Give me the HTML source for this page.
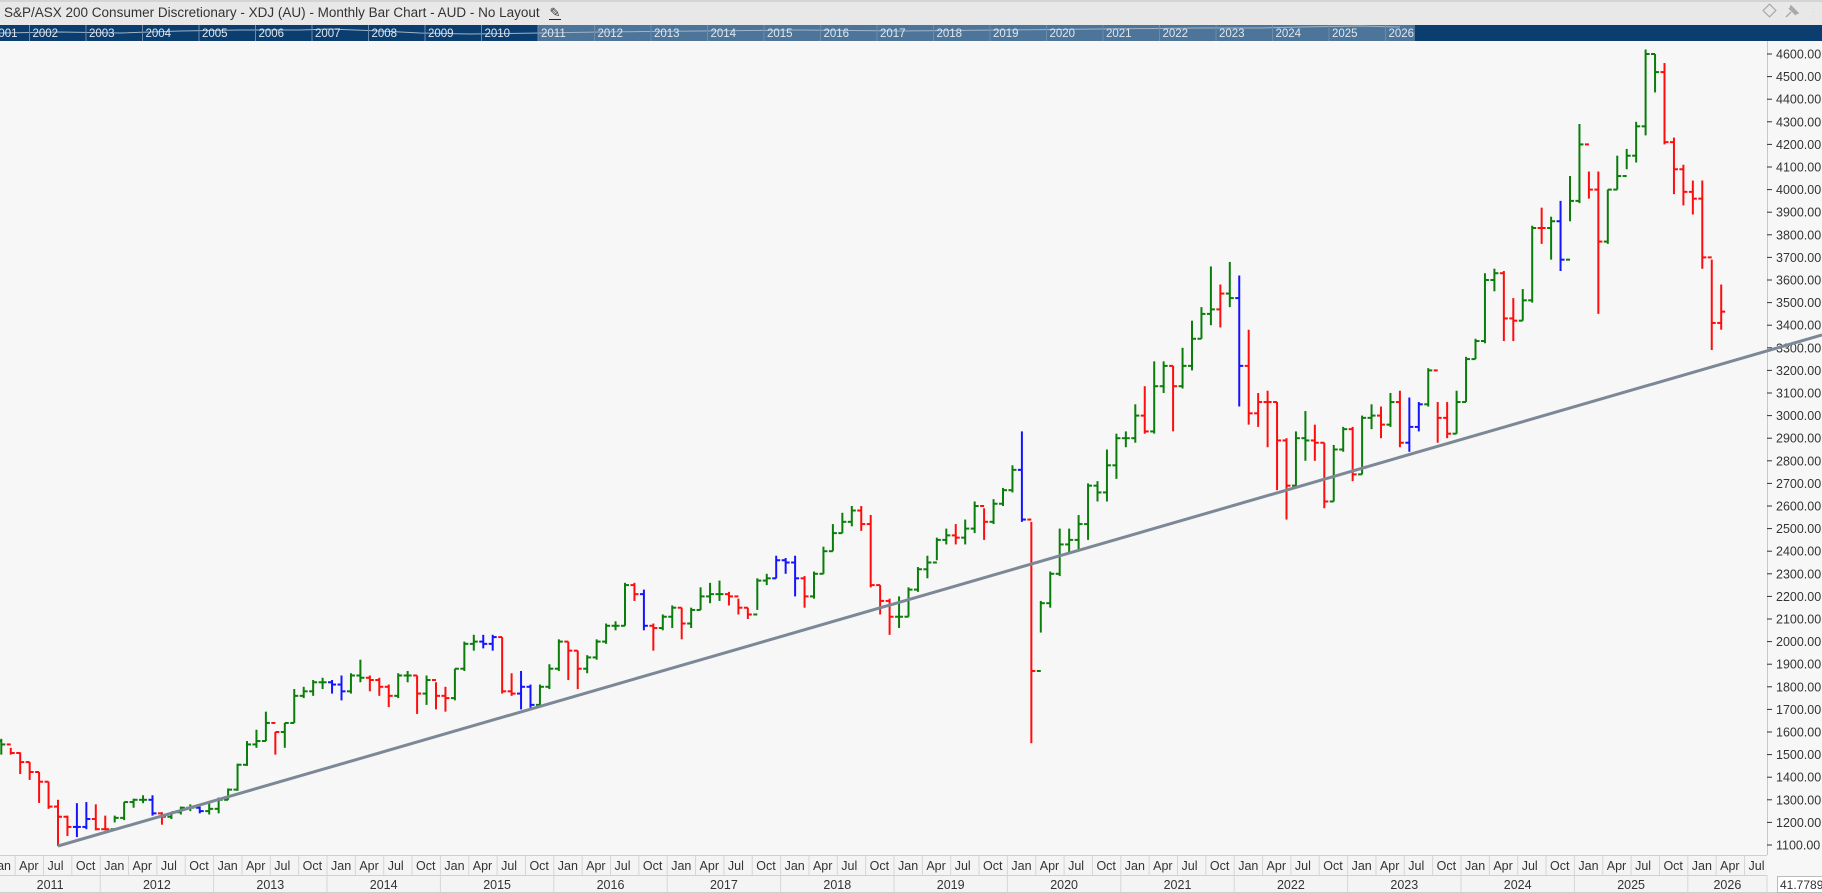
<!DOCTYPE html>
<html><head><meta charset="utf-8">
<style>
html,body{margin:0;padding:0;background:#f7f7f7;}
body{width:1822px;height:893px;overflow:hidden;position:relative;font-family:"Liberation Sans",sans-serif;}
#title{position:absolute;left:0;top:0;width:1822px;height:25px;background:#e8e8e8;border-top:2px solid #d4d4d4;box-sizing:border-box;font-size:13.5px;color:#333;line-height:22px;padding-left:4px;}
svg{position:absolute;left:0;top:0;}
</style></head><body>
<div id="title">S&amp;P/ASX 200 Consumer Discretionary - XDJ (AU) - Monthly Bar Chart - AUD - No Layout <span style="display:inline-block;width:12px;border-bottom:1.5px solid #222;margin-left:6px;line-height:12px;font-size:13px">&#9998;</span></div>
<svg id="s" width="1822" height="893" xmlns="http://www.w3.org/2000/svg"></svg>
<script>
var D=[[1545,1570,1500,'g'],[1507,1530,1500,'r'],[1467,1510,1414,'r'],[1423,1467,1388,'r'],[1380,1423,1286,'r'],[1270,1380,1260,'r'],
[1225,1300,1095,'r'],[1180,1230,1140,'r'],[1180,1285,1135,'b'],[1215,1290,1170,'b'],[1170,1280,1165,'r'],[1170,1230,1165,'r'],
[1220,1230,1200,'g'],[1290,1290,1210,'g'],[1300,1305,1265,'g'],[1300,1320,1285,'g'],[1240,1320,1230,'b'],[1225,1245,1190,'r'],
[1245,1245,1215,'g'],[1265,1270,1235,'g'],[1265,1280,1250,'g'],[1250,1270,1240,'b'],[1260,1295,1235,'g'],[1300,1310,1240,'g'],
[1345,1350,1300,'g'],[1455,1460,1340,'g'],[1545,1560,1450,'g'],[1560,1610,1530,'g'],[1640,1690,1560,'g'],[1600,1600,1500,'r'],
[1640,1640,1530,'g'],[1760,1790,1640,'g'],[1780,1800,1750,'g'],[1820,1830,1760,'g'],[1820,1840,1790,'g'],[1810,1830,1770,'b'],
[1780,1850,1740,'b'],[1850,1860,1770,'g'],[1840,1920,1820,'g'],[1830,1850,1780,'r'],[1800,1840,1760,'r'],[1760,1810,1710,'r'],
[1850,1860,1750,'g'],[1850,1870,1820,'g'],[1770,1850,1680,'r'],[1830,1850,1720,'g'],[1760,1820,1700,'r'],[1750,1800,1690,'r'],
[1880,1880,1740,'g'],[1990,2000,1870,'g'],[2000,2030,1960,'g'],[1990,2030,1970,'b'],[2020,2030,1960,'b'],[1780,2020,1770,'r'],
[1770,1860,1760,'r'],[1800,1870,1700,'b'],[1720,1810,1700,'b'],[1800,1810,1720,'g'],[1880,1900,1790,'g'],
[2000,2010,1870,'g'],[1960,2000,1830,'r'],[1880,1960,1790,'r'],[1930,1940,1860,'g'],[2000,2010,1920,'g'],[2070,2080,1990,'g'],
[2070,2090,2050,'g'],[2250,2260,2070,'g'],[2210,2260,2180,'r'],[2070,2230,2050,'b'],[2060,2080,1960,'r'],[2110,2120,2050,'g'],
[2150,2160,2060,'g'],[2080,2150,2010,'r'],[2140,2150,2060,'g'],[2200,2240,2140,'g'],[2210,2260,2170,'g'],[2210,2270,2180,'g'],
[2200,2220,2160,'r'],[2150,2190,2120,'r'],[2120,2150,2100,'r'],[2270,2280,2140,'g'],[2280,2300,2250,'g'],[2360,2380,2280,'b'],
[2350,2370,2300,'b'],[2280,2380,2200,'b'],[2200,2290,2150,'r'],[2300,2310,2190,'g'],[2400,2420,2300,'g'],[2480,2520,2400,'g'],
[2530,2570,2480,'g'],[2580,2600,2510,'g'],[2520,2600,2490,'r'],[2250,2560,2240,'r'],[2180,2250,2120,'r'],[2110,2190,2030,'r'],
[2110,2200,2060,'g'],[2230,2240,2110,'g'],[2320,2330,2220,'g'],[2350,2380,2280,'g'],[2450,2460,2360,'g'],[2470,2500,2430,'g'],
[2460,2520,2430,'r'],[2500,2540,2430,'g'],[2600,2620,2480,'g'],[2530,2590,2450,'r'],[2610,2630,2520,'g'],[2670,2680,2600,'g'],
[2760,2780,2660,'g'],[2540,2930,2530,'b'],[1870,2530,1550,'r'],[2170,2180,2040,'g'],[2300,2310,2150,'g'],[2430,2500,2290,'g'],
[2450,2500,2390,'g'],[2520,2560,2400,'g'],[2690,2700,2450,'g'],[2660,2710,2620,'g'],[2780,2850,2620,'g'],[2900,2920,2720,'g'],[2900,2930,2860,'g'],
[3000,3050,2880,'g'],[2930,3130,2920,'r'],[3130,3240,2920,'g'],[3220,3240,3100,'g'],[3130,3220,2930,'r'],[3220,3300,3120,'g'],
[3340,3420,3200,'g'],[3450,3480,3340,'g'],[3470,3660,3400,'g'],[3540,3580,3390,'r'],[3520,3680,3480,'g'],[3220,3620,3040,'b'],
[3010,3380,2960,'r'],[3060,3100,2950,'r'],[3060,3110,2860,'r'],[2890,3060,2670,'r'],[2690,2900,2540,'r'],[2900,2930,2680,'g'],
[2890,3020,2800,'g'],[2880,2960,2800,'r'],[2620,2880,2590,'r'],[2850,2870,2620,'g'],[2940,2950,2840,'g'],[2740,2950,2710,'r'],
[2990,3000,2740,'g'],[3000,3050,2940,'g'],[2960,3040,2900,'r'],[3060,3100,2950,'g'],[2880,3110,2860,'r'],[2950,3080,2840,'b'],
[3050,3060,2930,'b'],[3200,3210,3040,'g'],[2990,3060,2880,'r'],[2920,3060,2900,'r'],[3060,3110,2920,'g'],[3250,3260,3060,'g'],
[3330,3340,3250,'g'],[3600,3630,3320,'g'],[3630,3650,3550,'g'],[3430,3640,3330,'r'],[3420,3520,3330,'r'],[3510,3560,3420,'g'],
[3830,3840,3500,'g'],[3830,3920,3760,'r'],[3860,3880,3690,'g'],[3690,3950,3640,'b'],[3950,4060,3860,'g'],[4200,4290,3940,'g'],
[4000,4080,3960,'r'],[3770,4080,3450,'r'],[4000,4000,3760,'g'],[4060,4150,4000,'g'],[4150,4180,4090,'g'],[4280,4300,4120,'g'],
[4600,4620,4240,'g'],[4520,4600,4430,'g'],[4210,4560,4200,'r'],[4090,4230,3980,'r'],[3990,4110,3930,'r'],[3960,4040,3890,'r'],
[3700,4040,3650,'r'],[3410,3690,3290,'r'],[3460,3580,3380,'r']];
var C={g:'#0a7d0a',r:'#ff0d0d',b:'#1414ff'};
function Y(p){return 54+(4600-p)*0.2260;}
function X(m){return 58+m*9.45;}
var h='';
h+='<rect x="0" y="25" width="1822" height="16" fill="#0b3d6e"/>';
h+='<rect x="538" y="25" width="877" height="16" fill="#4d7499"/>';
h+='<polyline fill="none" stroke="#9fb4c8" stroke-width="1" points="0,33 60,32 120,33 180,31 240,30 300,30 330,29 380,31 420,33 470,34 540,33 600,32 700,31 800,30 900,31 1000,30 1100,29 1200,28 1260,28 1300,27 1360,26 1400,27"/>';
h+='<text x="-8" y="37" font-size="11.5" fill="#dfe7ef">2001</text>';
for(var i=1;i<26;i++){var xx=-27+i*56.5;h+='<line x1="'+xx+'" y1="25" x2="'+xx+'" y2="41" stroke="#6d8cab" stroke-width="1"/>';h+='<text x="'+(xx+3)+'" y="37" font-size="11.5" fill="#dfe7ef">'+(2001+i)+'</text>';}
h+='<rect x="1415" y="25" width="407" height="16" fill="#0b3d6e"/>';
h+='<line x1="1767.5" y1="41" x2="1767.5" y2="855" stroke="#c8c8c8"/>';
for(var p=1100;p<=4600;p+=100){var y=Y(p);h+='<line x1="1767" y1="'+y+'" x2="1772" y2="'+y+'" stroke="#333"/><text x="1776" y="'+(y+4.5)+'" font-size="12.5" fill="#333">'+p+'.00</text>';}
var prev=1560;
for(var i=0;i<D.length;i++){var d=D[i],m=i-6,x=X(m),c=C[d[3]];
h+='<line x1="'+x+'" y1="'+Y(d[1])+'" x2="'+x+'" y2="'+Y(d[2])+'" stroke="'+c+'" stroke-width="2"/>';
h+='<line x1="'+(x-4)+'" y1="'+Y(prev)+'" x2="'+x+'" y2="'+Y(prev)+'" stroke="'+c+'" stroke-width="2"/>';
h+='<line x1="'+x+'" y1="'+Y(d[0])+'" x2="'+(x+4)+'" y2="'+Y(d[0])+'" stroke="'+c+'" stroke-width="2"/>';
prev=d[0];}
h+='<line x1="58" y1="846" x2="1822" y2="335" stroke="#7d8897" stroke-width="3"/>';
h+='<rect x="0" y="855" width="1767" height="38" fill="#f4f4f4"/>';
h+='<line x1="0" y1="855.5" x2="1767" y2="855.5" stroke="#cfcfcf"/><line x1="0" y1="875.5" x2="1767" y2="875.5" stroke="#cfcfcf"/><line x1="0" y1="892.5" x2="1822" y2="892.5" stroke="#cfcfcf"/>';
var mn=['Jan','Apr','Jul','Oct'];
for(var m=-6;m<=180;m+=3){var sx=X(m)-14.5;var k=((m+6)/3)%4;
h+='<line x1="'+sx+'" y1="855" x2="'+sx+'" y2="875" stroke="#d6d6d6"/><text x="'+(sx+4)+'" y="870" font-size="12.5" fill="#333">'+mn[k]+'</text>';}
for(var yr=2011;yr<=2026;yr++){var a=X((yr-2011)*12-6)-14.5,b=a+113.4;if(a<0)a=0;if(b>1767)b=1767;
h+='<line x1="'+b+'" y1="875" x2="'+b+'" y2="893" stroke="#d6d6d6"/><text x="'+((a+b)/2)+'" y="889" font-size="12.5" fill="#333" text-anchor="middle">'+yr+'</text>';}
h+='<rect x="1777.5" y="876.5" width="50" height="16" fill="#fff" stroke="#bbb"/><text x="1780" y="889" font-size="12" fill="#333">41.77893</text>';
h+='<rect x="1765" y="6" width="9" height="9" fill="none" stroke="#aaa" stroke-width="1.2" transform="rotate(45 1769.5 10.5)"/>';
h+='<path d="M1786 17 L1791 12 M1789 8 L1796 15 M1791 6 L1798 13 L1795 14 L1790 9 Z" stroke="#aaa" stroke-width="1.5" fill="#aaa"/>';
h+='<text x="1807" y="16" font-size="12" fill="#ddd">&#8942;</text>';
document.getElementById('s').innerHTML=h;
</script>
</body></html>
